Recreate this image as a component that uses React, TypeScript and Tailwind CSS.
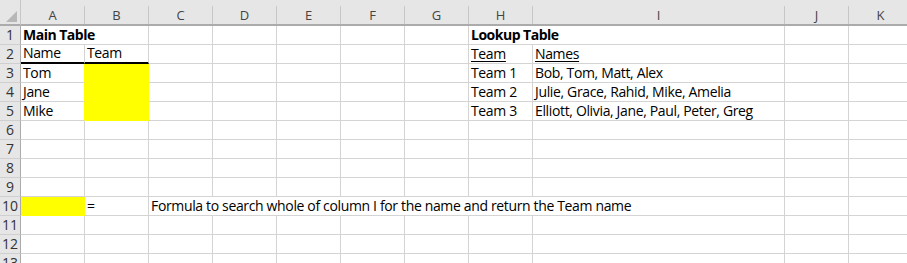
import React from 'react';

type CellDef = {
  text?: string;
  span?: number;
  bold?: boolean;
  underline?: boolean;
  fill?: boolean;
  thickBottom?: boolean;
};

const COLUMNS = ['A', 'B', 'C', 'D', 'E', 'F', 'G', 'H', 'I', 'J', 'K'];

const spanClass: Record<number, string> = {
  1: 'col-span-1',
  2: 'col-span-2',
  7: 'col-span-7',
};

const blank = (n: number): CellDef[] => Array.from({ length: n }, () => ({}));

// each row lists its cells left to right; spans cover overflowing text
const ROWS: CellDef[][] = [
  [{ text: 'Main Table', bold: true, span: 2 }, ...blank(5), { text: 'Lookup Table', bold: true, span: 2 }, ...blank(2)],
  [
    { text: 'Name', thickBottom: true },
    { text: 'Team', thickBottom: true },
    ...blank(5),
    { text: 'Team', underline: true },
    { text: 'Names', underline: true },
    ...blank(2),
  ],
  [{ text: 'Tom' }, { fill: true }, ...blank(5), { text: 'Team 1' }, { text: 'Bob, Tom, Matt, Alex' }, ...blank(2)],
  [{ text: 'Jane' }, { fill: true }, ...blank(5), { text: 'Team 2' }, { text: 'Julie, Grace, Rahid, Mike, Amelia' }, ...blank(2)],
  [{ text: 'Mike' }, { fill: true }, ...blank(5), { text: 'Team 3' }, { text: 'Elliott, Olivia, Jane, Paul, Peter, Greg' }, ...blank(2)],
  blank(11),
  blank(11),
  blank(11),
  blank(11),
  [
    { fill: true },
    { text: '=' },
    { text: 'Formula to search whole of column I for the name and return the Team name', span: 7 },
    ...blank(2),
  ],
  blank(11),
  blank(11),
  blank(11),
];

const Cell: React.FC<{ cell: CellDef; nextFilled: boolean }> = ({ cell, nextFilled }) => {
  const base =
    'h-[19px] flex items-end px-[2px] pb-[1px] whitespace-nowrap text-[14px] leading-[17px] text-black';
  let borders = 'border-r border-b border-[#d4d4d4]';
  if (cell.fill) borders = 'border-r border-b border-[#ffff00] bg-[#ffff00]';
  else if (cell.thickBottom) borders = 'border-r border-[#d4d4d4] border-b-2 border-b-black';
  else if (nextFilled) borders = 'border-r border-b border-[#d4d4d4] border-r-[#ffff00]';
  return (
    <div
      className={`${base} ${borders} ${spanClass[cell.span ?? 1]} ${
        cell.bold ? 'font-bold tracking-[-0.5px]' : 'tracking-[-0.35px]'
      }`}
    >
      {cell.text && (
        <span className={cell.underline ? 'underline underline-offset-[2px] decoration-1' : ''}>{cell.text}</span>
      )}
    </div>
  );
};

export default function App() {
  return (
    <div
      className="w-[907px] h-[263px] overflow-hidden bg-white"
      style={{ fontFamily: '"Open Sans", "Liberation Sans", sans-serif' }}
    >
      <div className="grid grid-cols-[21px_64px_64px_64px_64px_64px_64px_64px_64px_252px_64px_64px] w-[912px]">
        {/* corner */}
        <div className="h-[26px] bg-[#e6e6e6] border-b-2 border-r border-b-[#ababab] border-r-[#c6c6c6] flex items-end justify-end pr-[3px] pb-[2px]">
          <svg width="11" height="11" viewBox="0 0 11 11">
            <polygon points="11,0 11,11 0,11" fill="#b7b7b7" />
          </svg>
        </div>
        {/* column letters */}
        {COLUMNS.map((c) => (
          <div key={c} className="h-[26px] bg-[#e6e6e6] border-b-2 border-b-[#ababab] flex items-end">
            <div className="flex-1 h-[18px] border-r border-[#c6c6c6] flex items-center justify-center text-[13px] text-[#444] leading-none">
              {c}
            </div>
          </div>
        ))}

        {ROWS.map((row, r) => (
          <React.Fragment key={r}>
            <div className="h-[19px] bg-[#e6e6e6] border-r border-b border-r-[#ababab] border-b-[#cfcfcf] flex items-center justify-center text-[14px] text-[#333] leading-none">
              {r + 1}
            </div>
            {row.map((cell, i) => (
              <Cell key={i} cell={cell} nextFilled={!!row[i + 1]?.fill && !cell.fill} />
            ))}
          </React.Fragment>
        ))}
      </div>
    </div>
  );
}
